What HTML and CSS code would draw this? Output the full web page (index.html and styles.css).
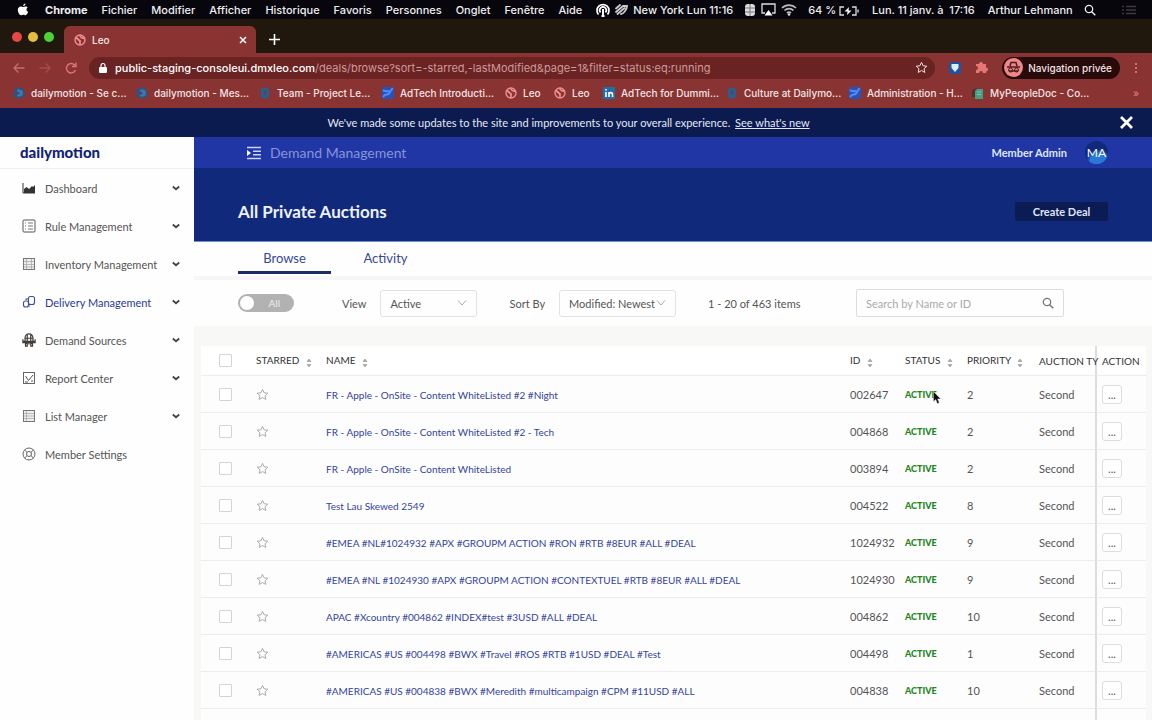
FILE: index.html
```
<!DOCTYPE html>
<html lang="en">

<head>
    <meta charset="UTF-8">
    <title>Leo</title>
    <link rel="stylesheet" href="styles.css">
</head>

<body>
    <!-- shared icons -->
    <svg class="sprite" aria-hidden="true">
        <symbol id="star" viewBox="0 0 24 24"><path d="M12 2.5l2.9 6.3 6.9.8-5.1 4.7 1.4 6.8L12 17.700l-6.100 3.400 1.400-6.800L2.200 9.600l6.900-.8z" fill="none" stroke="currentColor" stroke-width="1.800" stroke-linejoin="round"/></symbol>
        <symbol id="chevron" viewBox="0 0 10 10"><path d="M1 2.500l4 4.500 4-4.500" fill="none" stroke="currentColor"/></symbol>
        <symbol id="caret" viewBox="0 0 10 10"><path d="M1.800 3.500L5 6.200l3.200-2.700" fill="none" stroke="currentColor" stroke-width="1.800"/></symbol>
        <symbol id="search" viewBox="0 0 12 12"><circle cx="5" cy="5" r="3.700" fill="none" stroke="currentColor" stroke-width="1.300"/><path d="M7.700 7.700l3.600 3.600" stroke="currentColor" stroke-width="1.500"/></symbol>
        <symbol id="sort" viewBox="0 0 6 10"><path d="M1 3.500L3 1l2 2.500zM1 6.500L3 9l2-2.500z" fill="#aaa" stroke="#999" stroke-width=".6"/></symbol>
        <symbol id="leo" viewBox="0 0 12 12"><circle cx="6" cy="6" r="5" fill="#8c3535" stroke="#ef8f8f" stroke-width="1.400"/><path d="M2 3.500l4 3.500v3.500M6 1.500c0 2 2 2.500 4.500 3" fill="none" stroke="#ef8f8f" stroke-width="1.700"/></symbol>
        <symbol id="dm" viewBox="0 0 12 12"><circle cx="6" cy="6" r="5.500" fill="#285584"/><path d="M4 2.500h2.500a3.500 3.500 0 0 1 0 7H4z" fill="#3578b5"/><path d="M4 4.500L7 6 4 8z" fill="#71304a"/></symbol>
        <symbol id="drop" viewBox="0 0 12 12"><rect x="2" y=".5" width="8" height="11" rx="3" fill="#285e91"/><path d="M5 3.500h2v4H5z" fill="#70384f"/></symbol>
        <symbol id="confluence" viewBox="0 0 12 12"><rect width="12" height="12" rx="2" fill="#2853b5"/><path d="M1 10c3-5 4.500-.5 6.500-4S9.500 2 11 1.500M1 3c3 3 5-1 7 3" fill="none" stroke="#4e8cff" stroke-width="2"/></symbol>
    </svg>

    <header class="menubar">
        <nav class="menus">
            <svg class="apple" viewBox="0 0 14 16"><path d="M10.200 4.200c1.200 0 2 .6 2.600 1.300-2.300 1.500-1.800 4.500.6 5.400-.7 2-2 4.100-3.400 4.100-1 0-1.400-.6-2.600-.6s-1.700.6-2.600.6C2.700 15 .6 11.300.6 8.600c0-2.900 1.900-4.400 3.700-4.400 1.200 0 2 .7 2.900.7.800 0 1.800-.7 3-.7zM7.200 3.800C7.100 2.200 8.500.7 10 .6c.2 1.700-1.200 3.200-2.800 3.200z" fill="#fff"/></svg>
            <b>Chrome</b>
            <span>Fichier</span>
            <span>Modifier</span>
            <span>Afficher</span>
            <span>Historique</span>
            <span>Favoris</span>
            <span>Personnes</span>
            <span>Onglet</span>
            <span>Fenêtre</span>
            <span>Aide</span>
        </nav>
        <div class="status">
            <svg width="14" height="14" viewBox="0 0 14 14"><path d="M2.500 11.500A6 6 0 1 1 11.500 11.500M4.500 9.500a3.300 3.300 0 1 1 5 0" fill="none" stroke="#fff" stroke-width="1.700"/><path d="M7 6v7M5.500 13h3" stroke="#fff" stroke-width="2"/></svg>
            <svg width="13" height="12" viewBox="0 0 13 12"><path d="M1 8l7-6M2.500 10l7-6M1 4.500L5 1M6 10c2 0 6-4 6-8H8" fill="none" stroke="#ccc" stroke-width="1.800" stroke-linecap="round"/></svg>
            <span>New York Lun 11:16</span>
            <svg class="grow" width="12" height="14" viewBox="0 0 12 14"><rect x="1" y="1" width="10" height="12" rx="3" fill="#ddd"/><path d="M1 5h10M1 9h10M6 1v12" stroke="#777"/></svg>
            <svg width="15" height="13" viewBox="0 0 15 13"><path d="M4 10H1V1h13v9h-3" fill="none" stroke="#ddd" stroke-width="1.300"/><path d="M7.500 7l4 5.500h-8z" fill="#fff"/></svg>
            <svg width="16" height="13" viewBox="0 0 16 13"><path d="M1 5a10 10 0 0 1 14 0M3.500 7.500a6.500 6.500 0 0 1 9 0M6 10a3 3 0 0 1 4 0" fill="none" stroke="#bbb" stroke-width="1.700"/><circle cx="8" cy="11.500" r="1.300" fill="#ddd"/></svg>
            <span class="battery">64 %
                <svg width="20" height="10" viewBox="0 0 20 10"><path d="M5 1H1v8h4M13 1h4v8h-4M19 3.500v3" fill="none" stroke="#ddd" stroke-width="1.300"/><path d="M10 1L5.500 5.500h3L8 9l4.500-4.500h-3z" fill="#fff"/></svg>
            </span>
            <span>Lun. 11 janv. à&nbsp; 17:16</span>
            <span>Arthur Lehmann</span>
            <svg width="12" height="12"><use href="#search"/></svg>
            <svg width="14" height="10" viewBox="0 0 14 10"><path d="M0 1.500h2m2 0h10M0 5h2m2 0h10M0 8.500h2m2 0h10" stroke="#3c3a3d" stroke-width="1.500"/></svg>
        </div>
    </header>

    <div class="tabstrip">
        <div class="lights"><i class="red"></i><i class="yellow"></i><i class="green"></i></div>
        <div class="tab">
            <svg width="12" height="12"><use href="#leo"/></svg>
            <span>Leo</span>
            <button class="plain" aria-label="Close tab"><svg width="8" height="8" viewBox="0 0 8 8"><path d="M1 1l6 6M7 1L1 7" stroke="#fff" stroke-width="1.500"/></svg></button>
        </div>
        <button class="plain" aria-label="New tab"><svg width="11" height="11" viewBox="0 0 11 11"><path d="M5.500 0v11M0 5.500h11" stroke="#fff" stroke-width="1.600"/></svg></button>
    </div>

    <div class="toolbar">
        <button class="plain" aria-label="Back"><svg width="12" height="12" viewBox="0 0 12 12"><path d="M11.500 6H1M5.500 1.500L1 6l4.500 4.500" fill="none" stroke="#c77070" stroke-width="1.300"/></svg></button>
        <button class="plain" aria-label="Forward"><svg width="12" height="12" viewBox="0 0 12 12"><path d="M.5 6H11M6.500 1.500L11 6l-4.500 4.500" fill="none" stroke="#a94b4b" stroke-width="1.300"/></svg></button>
        <button class="plain" aria-label="Reload"><svg width="12" height="12" viewBox="0 0 12 12"><path d="M10 3.500A4.700 4.700 0 1 0 10.500 8M11 .5v4H7" fill="none" stroke="#de7777" stroke-width="1.400"/></svg></button>
        <div class="address">
            <svg width="8" height="10" viewBox="0 0 8 10"><rect y="4" width="8" height="6" rx="1" fill="#fff"/><path d="M2 4V2.500a2 2 0 0 1 4 0V4" fill="none" stroke="#fff" stroke-width="1.200"/></svg>
            <div class="url"><b>public-staging-consoleui.dmxleo.com</b>/deals/browse?sort=-starred,-lastModified&amp;page=1&amp;filter=status:eq:running</div>
            <svg width="13" height="13"><use href="#star"/></svg>
        </div>
        <svg width="12" height="12" viewBox="0 0 12 12"><rect width="12" height="12" rx="2" fill="#20539c"/><path d="M2.500 2h7v4L6 10 2.500 6z" fill="#d9efff"/></svg>
        <svg width="13" height="13" viewBox="0 0 13 13"><path d="M1 3h3a2 2 0 1 1 4 0h3v3.500a2 2 0 0 1 0 4V12H8a2 2 0 0 0-4 0H1V9a2 2 0 0 0 0-4z" fill="#e77777"/></svg>
        <div class="incognito">
            <svg width="19" height="19" viewBox="0 0 19 19"><circle cx="9.500" cy="9.500" r="9.500" fill="#ee8788"/><path d="M3 9h13M6 8l1-3.500h5L13 8M5 13h9" fill="none" stroke="#4b1b1b" stroke-width="1.500"/><circle cx="6.500" cy="12" r="2" fill="none" stroke="#4b1b1b"/><circle cx="12.500" cy="12" r="2" fill="none" stroke="#4b1b1b"/></svg>
            <span>Navigation privée</span>
        </div>
        <button class="plain" aria-label="Menu"><svg width="4" height="12" viewBox="0 0 4 12"><path d="M2 1v2m0 2v2m0 2v2" stroke="#df7777" stroke-width="1.800"/></svg></button>
    </div>

    <nav class="bookmarks">
        <a href="#"><svg><use href="#dm"/></svg>dailymotion - Se c...</a>
        <a href="#"><svg><use href="#dm"/></svg>dailymotion - Mes...</a>
        <a href="#"><svg><use href="#drop"/></svg>Team - Project Le...</a>
        <a href="#"><svg><use href="#confluence"/></svg>AdTech Introducti...</a>
        <a href="#" class="short"><svg><use href="#leo"/></svg>Leo</a>
        <a href="#" class="short"><svg><use href="#leo"/></svg>Leo</a>
        <a href="#"><svg viewBox="0 0 12 12"><rect width="12" height="12" rx="1" fill="#1e70aa"/><path d="M3 5v5M3 2v1.500M6 10V5m0 2.500c0-2.500 3.500-2.500 3.500 0V10" fill="none" stroke="#fff" stroke-width="1.600"/></svg>AdTech for Dummi...</a>
        <a href="#"><svg><use href="#drop"/></svg>Culture at Dailymo...</a>
        <a href="#"><svg><use href="#confluence"/></svg>Administration - H...</a>
        <a href="#"><svg viewBox="0 0 12 12"><path d="M0 3l5-2v9H0z" fill="#5b2b30"/><path d="M3 4l2-2h6v10H3z" fill="#43a083"/><path d="M5 5h4M5 7.500h4" stroke="#78c5aa"/></svg>MyPeopleDoc - Co...</a>
        <span class="more">»</span>
    </nav>

    <div class="banner">
        <p>We've made some updates to the site and improvements to your overall experience. <a href="#">See what's new</a></p>
        <button class="plain" aria-label="Dismiss"><svg width="13" height="13" viewBox="0 0 13 13"><path d="M1 1l11 11M12 1L1 12" stroke="#fff" stroke-width="2.800"/></svg></button>
    </div>

    <div class="app">
        <aside class="sidebar">
            <div class="logo">dailymotion</div>
            <ul>
                <li><a href="#">
                    <svg viewBox="0 0 14 14"><path d="M1 2v10h12" fill="none" stroke="#333"/><path d="M2 12V8l2.500-2L7 8l3-3 1 1 2-2v8z" fill="#333"/></svg>
                    <span>Dashboard</span><svg class="caret"><use href="#caret"/></svg></a></li>
                <li><a href="#">
                    <svg viewBox="0 0 14 14"><rect x="1" y="1" width="12" height="12" rx="1" fill="none" stroke="#555"/><path d="M6 4h5M6 7h5M6 10h5M3 4h1M3 7h1M3 10h1" stroke="#777"/></svg>
                    <span>Rule Management</span><svg class="caret"><use href="#caret"/></svg></a></li>
                <li><a href="#">
                    <svg viewBox="0 0 14 14"><rect x="1.500" y="1.500" width="11" height="11" fill="#eee" stroke="#777"/><path d="M4.500 2v10M9.500 2v10M2 4.500h10M2 7.500h10M2 10h10" stroke="#aaa" stroke-width=".8"/></svg>
                    <span>Inventory Management</span><svg class="caret"><use href="#caret"/></svg></a></li>
                <li><a href="#" class="current">
                    <svg viewBox="0 0 14 14"><g fill="none" stroke="#3e4d93" stroke-width="1.100"><rect x="6.500" y="1.500" width="6" height="8" rx="2"/><rect x="1.500" y="6" width="5" height="6" rx="2"/><path d="M4 5V4h2M8 11H7"/></g></svg>
                    <span>Delivery Management</span><svg class="caret"><use href="#caret"/></svg></a></li>
                <li><a href="#">
                    <svg viewBox="0 0 16 16"><g fill="none" stroke="#443e3a" stroke-width="1.400"><path d="M3.500 9V5.500a4.500 4.500 0 0 1 9 0V9M1 9.500h14M1 7v4h14V7M6 2v7M10 2v7M3 6h10"/><path d="M4 12h2v3H4zM10 12h2v3h-2zM8 9v4"/></g></svg>
                    <span>Demand Sources</span><svg class="caret"><use href="#caret"/></svg></a></li>
                <li><a href="#">
                    <svg viewBox="0 0 14 14"><rect x="1.500" y="1.500" width="11" height="11" fill="none" stroke="#666"/><path d="M3.500 5l3 4.500L11 4M3 11h3M9 10h2" fill="none" stroke="#555"/></svg>
                    <span>Report Center</span><svg class="caret"><use href="#caret"/></svg></a></li>
                <li><a href="#">
                    <svg viewBox="0 0 14 14"><rect x="1.500" y="1.500" width="11" height="11" fill="#eee" stroke="#777"/><path d="M4.500 2v10M2 4.500h10M2 7h10M2 9.500h10" stroke="#aaa" stroke-width=".8"/></svg>
                    <span>List Manager</span><svg class="caret"><use href="#caret"/></svg></a></li>
                <li><a href="#">
                    <svg viewBox="0 0 14 14"><g fill="none" stroke="#666"><circle cx="7" cy="7" r="6"/><circle cx="7" cy="7" r="2.500"/><path d="M2.500 3l2.700 2.500M11.500 3L8.800 5.500M2.500 11l2.700-2.500M11.500 11L8.800 8.500"/></g></svg>
                    <span>Member Settings</span></a></li>
            </ul>
        </aside>

        <main class="content">
            <div class="topbar">
                <button class="plain" aria-label="Collapse menu"><svg width="16" height="14" viewBox="0 0 16 14"><path d="M1 1.500h14M7 5.200h8M7 8.800h8M1 12.500h14" stroke="#cbd4ff" stroke-width="1.600"/><path d="M1 4v6l4-3z" fill="#fff"/></svg></button>
                <span class="section">Demand Management</span>
                <span class="member">Member Admin</span>
                <span class="avatar">MA</span>
            </div>
            <div class="hero">
                <h1>All Private Auctions</h1>
                <button class="create">Create Deal</button>
            </div>
            <nav class="tabs">
                <a href="#" class="selected">Browse</a>
                <a href="#">Activity</a>
            </nav>
            <div class="filters">
                <label class="switch"><input type="checkbox"><span>All</span></label>
                <label class="field view">View
                    <span class="select"><select><option>Active</option></select><svg><use href="#chevron"/></svg></span>
                </label>
                <label class="field sortby">Sort By
                    <span class="select wide"><select><option>Modified: Newest</option></select><svg><use href="#chevron"/></svg></span>
                </label>
                <span class="count">1 - 20 of 463 items</span>
                <div class="searchbox">
                    <input type="text" placeholder="Search by Name or ID" aria-label="Search by Name or ID">
                    <svg width="12" height="12"><use href="#search"/></svg>
                </div>
            </div>

            <div class="panel">
                <table>
                    <colgroup>
                        <col class="c-check"><col class="c-star"><col><col class="c-id"><col class="c-status"><col class="c-priority"><col class="c-type"><col class="c-action">
                    </colgroup>
                    <thead>
                        <tr>
                            <th><input type="checkbox" aria-label="Select all"></th>
                            <th>STARRED <svg><use href="#sort"/></svg></th>
                            <th>NAME <svg><use href="#sort"/></svg></th>
                            <th>ID <svg><use href="#sort"/></svg></th>
                            <th>STATUS <svg><use href="#sort"/></svg></th>
                            <th>PRIORITY <svg><use href="#sort"/></svg></th>
                            <th>AUCTION TY</th>
                            <th>ACTION</th>
                        </tr>
                    </thead>
                    <tbody>
                        <tr>
                            <td><input type="checkbox" aria-label="Select 002647"></td>
                            <td><button class="plain star" aria-label="Star"><svg><use href="#star"/></svg></button></td>
                            <td><a href="#">FR - Apple - OnSite - Content WhiteListed #2 #Night</a></td>
                            <td>002647</td>
                            <td class="active pointed">ACTIVE
                                <svg class="cursor" viewBox="0 0 8 13"><path d="M.5.5v10l2.300-2 1.500 4 2-.8-1.600-3.800h3z" fill="#111" stroke="#eee" stroke-width=".4"/></svg></td>
                            <td>2</td>
                            <td>Second</td>
                            <td><button class="more-btn" aria-label="More">...</button></td>
                        </tr>
                        <tr>
                            <td><input type="checkbox" aria-label="Select 004868"></td>
                            <td><button class="plain star" aria-label="Star"><svg><use href="#star"/></svg></button></td>
                            <td><a href="#">FR - Apple - OnSite - Content WhiteListed #2 - Tech</a></td>
                            <td>004868</td>
                            <td class="active">ACTIVE</td>
                            <td>2</td>
                            <td>Second</td>
                            <td><button class="more-btn" aria-label="More">...</button></td>
                        </tr>
                        <tr>
                            <td><input type="checkbox" aria-label="Select 003894"></td>
                            <td><button class="plain star" aria-label="Star"><svg><use href="#star"/></svg></button></td>
                            <td><a href="#">FR - Apple - OnSite - Content WhiteListed</a></td>
                            <td>003894</td>
                            <td class="active">ACTIVE</td>
                            <td>2</td>
                            <td>Second</td>
                            <td><button class="more-btn" aria-label="More">...</button></td>
                        </tr>
                        <tr>
                            <td><input type="checkbox" aria-label="Select 004522"></td>
                            <td><button class="plain star" aria-label="Star"><svg><use href="#star"/></svg></button></td>
                            <td><a href="#">Test Lau Skewed 2549</a></td>
                            <td>004522</td>
                            <td class="active">ACTIVE</td>
                            <td>8</td>
                            <td>Second</td>
                            <td><button class="more-btn" aria-label="More">...</button></td>
                        </tr>
                        <tr>
                            <td><input type="checkbox" aria-label="Select 1024932"></td>
                            <td><button class="plain star" aria-label="Star"><svg><use href="#star"/></svg></button></td>
                            <td><a href="#">#EMEA #NL#1024932 #APX #GROUPM ACTION #RON #RTB #8EUR #ALL #DEAL</a></td>
                            <td>1024932</td>
                            <td class="active">ACTIVE</td>
                            <td>9</td>
                            <td>Second</td>
                            <td><button class="more-btn" aria-label="More">...</button></td>
                        </tr>
                        <tr>
                            <td><input type="checkbox" aria-label="Select 1024930"></td>
                            <td><button class="plain star" aria-label="Star"><svg><use href="#star"/></svg></button></td>
                            <td><a href="#">#EMEA #NL #1024930 #APX #GROUPM ACTION #CONTEXTUEL #RTB #8EUR #ALL #DEAL</a></td>
                            <td>1024930</td>
                            <td class="active">ACTIVE</td>
                            <td>9</td>
                            <td>Second</td>
                            <td><button class="more-btn" aria-label="More">...</button></td>
                        </tr>
                        <tr>
                            <td><input type="checkbox" aria-label="Select 004862"></td>
                            <td><button class="plain star" aria-label="Star"><svg><use href="#star"/></svg></button></td>
                            <td><a href="#">APAC #Xcountry #004862 #INDEX#test #3USD #ALL #DEAL</a></td>
                            <td>004862</td>
                            <td class="active">ACTIVE</td>
                            <td>10</td>
                            <td>Second</td>
                            <td><button class="more-btn" aria-label="More">...</button></td>
                        </tr>
                        <tr>
                            <td><input type="checkbox" aria-label="Select 004498"></td>
                            <td><button class="plain star" aria-label="Star"><svg><use href="#star"/></svg></button></td>
                            <td><a href="#">#AMERICAS #US #004498 #BWX #Travel #ROS #RTB #1USD #DEAL #Test</a></td>
                            <td>004498</td>
                            <td class="active">ACTIVE</td>
                            <td>1</td>
                            <td>Second</td>
                            <td><button class="more-btn" aria-label="More">...</button></td>
                        </tr>
                        <tr>
                            <td><input type="checkbox" aria-label="Select 004838"></td>
                            <td><button class="plain star" aria-label="Star"><svg><use href="#star"/></svg></button></td>
                            <td><a href="#">#AMERICAS #US #004838 #BWX #Meredith #multicampaign #CPM #11USD #ALL</a></td>
                            <td>004838</td>
                            <td class="active">ACTIVE</td>
                            <td>10</td>
                            <td>Second</td>
                            <td><button class="more-btn" aria-label="More">...</button></td>
                        </tr>
                        <tr>
                            <td></td><td></td><td></td><td></td><td></td><td></td><td></td><td></td>
                        </tr>
                    </tbody>
                </table>
            </div>
        </main>
    </div>
</body>

</html>
```
FILE: styles.css
```
* {
    box-sizing: border-box;
}

body {
    margin: 0;
    height: 100vh;
    display: flex;
    flex-direction: column;
    overflow: hidden;
    font-family: Lato, "Open Sans", sans-serif;
    font-size: 11px;
    color: #555;
    background: #fefefe;
}

a {
    color: inherit;
    text-decoration: none;
}

svg {
    flex: none;
}

.sprite {
    position: absolute;
    width: 0;
    height: 0;
}

.plain {
    display: flex;
    padding: 0;
    border: none;
    background: none;
    color: inherit;
    cursor: pointer;
}

/* system menu bar */
.menubar,
.tabstrip,
.toolbar,
.bookmarks {
    flex: none;
    display: flex;
    align-items: center;
    font-family: Inter, "Liberation Sans", sans-serif;
    color: #f3e4e4;
    white-space: nowrap;
}

.menubar {
    height: 19px;
    padding: 0 16px 0 17px;
    background: #08060d;
    color: #eee;
    font-size: 11px;
    font-weight: 500;
}

.menus,
.status {
    display: flex;
    align-items: center;
    gap: 14px;
}

.menus b {
    margin-left: 2px;
}

.status {
    flex: 1;
    margin-left: 14px;
    gap: 5px;
}

.status .grow,
.battery {
    margin-left: 6px;
}

.status span + span {
    margin-left: 8px;
}

.status span + svg {
    margin-left: 6px;
}

.status svg:last-child {
    margin-left: auto;
}

.battery svg {
    vertical-align: middle;
}

.apple {
    width: 12px;
    height: 13px;
}

/* browser window */
.tabstrip {
    height: 34px;
    padding-left: 12px;
    background: #20180d;
    align-items: flex-end;
}

.tabstrip > .plain {
    margin: 0 0 8px 13px;
}

.lights {
    display: flex;
    gap: 6px;
    margin: 0 10px 11px 0;
}

.lights i {
    width: 10px;
    height: 10px;
    border-radius: 50%;
}

.lights .red {
    background: #e8474a;
}

.lights .yellow {
    background: #e6bd3f;
}

.lights .green {
    background: #4cd137;
}

.tab {
    width: 192px;
    height: 27px;
    padding: 0 9px 0 10px;
    display: flex;
    align-items: center;
    gap: 6px;
    border-radius: 6px 6px 0 0;
    background: #893333;
    font-size: 10px;
    font-weight: 500;
}

.tab span {
    flex: 1;
}

.toolbar {
    height: 29px;
    padding: 0 14px 0 13px;
    gap: 14px;
    background: #893333;
}

.address {
    flex: 1;
    min-width: 0;
    height: 22px;
    margin-left: -2px;
    padding: 0 7px 0 10px;
    display: flex;
    align-items: center;
    gap: 8px;
    border-radius: 11px;
    background: #6a2323;
}

.url {
    flex: 1;
    font-size: 11px;
    color: #cf9999;
    overflow: hidden;
}

.url b {
    font-weight: 500;
    color: #fff;
}

.incognito {
    height: 22px;
    padding: 0 8px 0 2px;
    display: flex;
    align-items: center;
    gap: 5px;
    border-radius: 11px;
    background: #260b0a;
    font-size: 10px;
    font-weight: 500;
}

.bookmarks {
    height: 26px;
    padding: 0 13px 4px;
    background: #893333;
    font-size: 10px;
    font-weight: 500;
}

.bookmarks a {
    width: 123px;
    display: flex;
    align-items: center;
    gap: 6px;
}

.bookmarks a.short {
    width: 49px;
}

.bookmarks svg {
    width: 12px;
    height: 12px;
}

.more {
    margin-left: auto;
    color: #d77;
}

.banner {
    flex: none;
    height: 29px;
    padding: 0 19px 0 17px;
    display: flex;
    align-items: center;
    background: #0b1b50;
    color: #e4e8f5;
}

.banner p {
    flex: 1;
    margin: 0;
    text-align: center;
}

.banner a {
    margin-left: 2px;
    text-decoration: underline;
}

/* console */
.app {
    flex: 1;
    min-height: 0;
    display: flex;
}

.sidebar {
    flex: none;
    width: 194px;
}

.logo {
    height: 32px;
    padding-left: 20px;
    border-bottom: 1px solid #eee;
    font-size: 15px;
    font-weight: 900;
    line-height: 30px;
    color: #10237a;
}

.sidebar ul {
    margin: 0;
    padding: 0;
    list-style: none;
}

.sidebar li a {
    height: 38px;
    padding: 0 13px 0 22px;
    display: flex;
    align-items: center;
    gap: 9px;
}

.sidebar li span {
    flex: 1;
    white-space: nowrap;
}

.sidebar li svg {
    width: 14px;
    height: 14px;
}

.sidebar li .caret {
    width: 10px;
    height: 10px;
    color: #444;
}

.sidebar .current {
    color: #2c3a98;
}

.content {
    flex: 1;
    min-width: 0;
    display: flex;
    flex-direction: column;
}

.topbar {
    flex: none;
    height: 31px;
    padding: 0 44px 0 52px;
    display: flex;
    align-items: center;
    background: #2036a5;
    color: #dfe5ff;
}

.section {
    flex: 1;
    margin-left: 8px;
    font-size: 14px;
    color: #8795d8;
}

.member {
    font-weight: 700;
}

.avatar {
    width: 23px;
    height: 23px;
    margin-left: 18px;
    border-radius: 50%;
    background: radial-gradient(circle at 60% 90%, #2878d8 35%, #10297a 50%);
    text-align: center;
    font-size: 12px;
    line-height: 23px;
    color: #fff;
}

.hero {
    flex: none;
    height: 74px;
    padding: 14px 44px 0;
    display: flex;
    align-items: center;
    justify-content: space-between;
    background: #10297a;
    border-bottom: 1px solid #6e8fd0;
}

.hero h1 {
    margin: 0;
    font-size: 17px;
    font-weight: 700;
    color: #edf2ff;
}

.create {
    width: 93px;
    height: 19px;
    padding: 0;
    border: none;
    border-radius: 2px;
    background: #0b1b53;
    font: 700 11px Lato, sans-serif;
    color: #dfe5f7;
}

.tabs {
    flex: none;
    height: 38px;
    padding-left: 44px;
    display: flex;
    gap: 8px;
    border-bottom: 4px solid #f6f6f6;
}

.tabs a {
    width: 93px;
    height: 32px;
    text-align: center;
    line-height: 32px;
    font-size: 13px;
    color: #39479a;
}

.tabs .selected {
    border-bottom: 3px solid #1d2b66;
}

.filters {
    flex: none;
    height: 46px;
    padding: 0 88px 0 44px;
    display: flex;
    align-items: center;
}

.switch input {
    position: absolute;
    opacity: 0;
}

.switch span {
    width: 56px;
    height: 18px;
    padding: 2px 14px 2px 2px;
    display: flex;
    align-items: center;
    justify-content: space-between;
    border-radius: 9px;
    background: #b2b2b2;
    font-size: 10px;
    color: #eee;
}

.switch span::before {
    content: "";
    width: 14px;
    height: 14px;
    border-radius: 50%;
    background: #fff;
}

.field {
    display: flex;
    align-items: center;
    gap: 14px;
}

.view {
    margin-left: 48px;
}

.sortby {
    margin-left: 32px;
}

.select {
    display: flex;
    align-items: center;
    width: 97px;
    height: 27px;
    border: 1px solid #e2e2e2;
    border-radius: 3px;
}

.select.wide {
    width: 117px;
}

.select select {
    flex: 1;
    min-width: 0;
    height: 25px;
    padding: 0 0 0 9px;
    appearance: none;
    border: none;
    background: none;
    font: 11px Lato, sans-serif;
    color: #555;
}

.select svg {
    width: 10px;
    height: 10px;
    margin-right: 9px;
    color: #aaa;
}

.count {
    margin-left: 32px;
}

.searchbox {
    width: 208px;
    height: 28px;
    margin-left: auto;
    padding: 0 9px;
    display: flex;
    align-items: center;
    border: 1px solid #ddd;
    border-radius: 2px;
    color: #777;
}

.searchbox input {
    flex: 1;
    min-width: 0;
    padding: 0;
    border: none;
    background: none;
    font: 11px Lato, sans-serif;
}

.searchbox input::placeholder {
    color: #aaa;
}

.panel {
    flex: 1;
    min-height: 0;
    padding: 20px 6px 0 7px;
    background: #f8f8f7;
}

table {
    width: 100%;
    table-layout: fixed;
    border-collapse: separate;
    border-spacing: 0;
    background: #fdfdfd;
}

.c-check {
    width: 45px;
}

.c-star {
    width: 70px;
}

.c-id {
    width: 55px;
}

.c-status {
    width: 62px;
}

.c-priority {
    width: 72px;
}

.c-type {
    width: 66px;
}

.c-action {
    width: 51px;
}

th,
td {
    height: 37px;
    padding: 0 0 0 10px;
    border-bottom: 1px solid #ededed;
    text-align: left;
    white-space: nowrap;
}

th {
    height: 30px;
    font-size: 10px;
    font-weight: 400;
    color: #333;
    background: #fff;
}

th svg {
    width: 6px;
    height: 10px;
    margin-left: 4px;
    vertical-align: -4px;
}

th:first-child,
td:first-child {
    padding-left: 18px;
}

th:last-child,
td:last-child {
    padding-left: 5px;
    border-left: 2px solid #ddd;
}

td a {
    font-size: 10px;
    color: #3443a0;
}

table input {
    display: block;
    appearance: none;
    width: 13px;
    height: 13px;
    margin: 0;
    border: 1px solid #d4d4d4;
    border-radius: 1px;
    background: #fff;
}

.star svg {
    width: 13px;
    height: 13px;
    color: #aaa;
}

td.active {
    font-size: 9px;
    font-weight: 900;
    color: #23851a;
}

.pointed {
    position: relative;
}

.cursor {
    position: absolute;
    top: 15px;
    left: 38px;
    width: 8px;
    height: 13px;
}

.more-btn {
    display: block;
    width: 20px;
    height: 19px;
    padding: 0;
    border: 1px solid #ddd;
    border-radius: 3px;
    background: #fff;
    font: 11px Lato, sans-serif;
    color: #555;
}
```
